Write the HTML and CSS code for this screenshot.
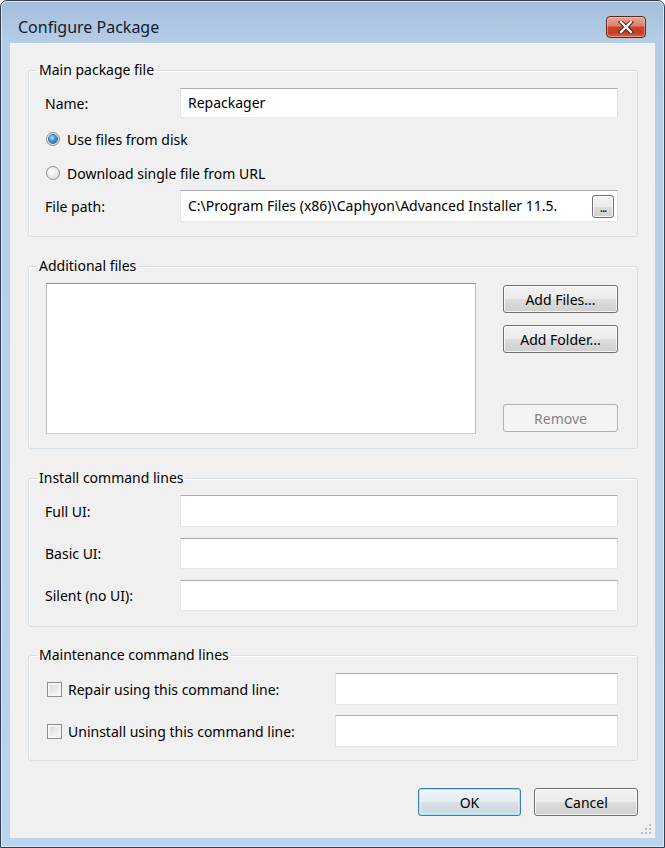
FILE: index.html
```html
<!DOCTYPE html>
<html>
<head>
<meta charset="utf-8">
<link rel="stylesheet" href="styles.css">
</head>
<body>
<div class="window">
  <div class="titlebar">
    <span class="title">Configure Package</span>
    <div class="close">
      <svg width="18" height="12" viewBox="0 0 18 12"><path d="M4 1 L14 11 M14 1 L4 11" stroke="#3b1a14" stroke-width="4.2" stroke-linecap="square"/><path d="M4 1 L14 11 M14 1 L4 11" stroke="#ffffff" stroke-width="2.4" stroke-linecap="square"/></svg>
    </div>
  </div>
  <div class="client">
    <fieldset class="group g1">
      <legend>Main package file</legend>
      <div class="row r-name">
        <span class="label">Name:</span>
        <div class="input wide">Repackager</div>
      </div>
      <div class="opt r-disk"><span class="radio checked"></span><span>Use files from disk</span></div>
      <div class="opt r-url"><span class="radio"></span><span>Download single file from URL</span></div>
      <div class="row r-path">
        <span class="label">File path:</span>
        <div class="input wide path"><span class="path-text">C:\Program Files (x86)\Caphyon\Advanced Installer 11.5.</span><span class="browse">...</span></div>
      </div>
    </fieldset>

    <fieldset class="group g2">
      <legend>Additional files</legend>
      <div class="files">
        <div class="listbox"></div>
        <div class="side">
          <span class="btn">Add Files...</span>
          <span class="btn gap">Add Folder...</span>
          <span class="btn disabled push">Remove</span>
        </div>
      </div>
    </fieldset>

    <fieldset class="group g3">
      <legend>Install command lines</legend>
      <div class="row r-cmd1"><span class="label">Full UI:</span><div class="input wide"></div></div>
      <div class="row r-cmd2"><span class="label">Basic UI:</span><div class="input wide"></div></div>
      <div class="row r-cmd3"><span class="label">Silent (no UI):</span><div class="input wide"></div></div>
    </fieldset>

    <fieldset class="group g4">
      <legend>Maintenance command lines</legend>
      <div class="row r-m1"><span class="check"></span><span class="clabel">Repair using this command line:</span><div class="input short"></div></div>
      <div class="row r-m2"><span class="check"></span><span class="clabel">Uninstall using this command line:</span><div class="input short"></div></div>
    </fieldset>

    <div class="actions">
      <span class="btn default">OK</span>
      <span class="btn">Cancel</span>
    </div>

    <svg class="grip" width="12" height="12" viewBox="0 0 12 12">
      <g fill="#b9bec6">
        <rect x="9" y="1" width="2" height="2"/>
        <rect x="5" y="5" width="2" height="2"/><rect x="9" y="5" width="2" height="2"/>
        <rect x="1" y="9" width="2" height="2"/><rect x="5" y="9" width="2" height="2"/><rect x="9" y="9" width="2" height="2"/>
      </g>
    </svg>
  </div>
</div>
</body>
</html>
```

FILE: styles.css
```css
* { box-sizing: border-box; }
html, body { margin: 0; padding: 0; background: #ffffff; }
body {
  font-family: "Noto Sans", "Open Sans", "DejaVu Sans", sans-serif;
  font-size: 14px;
  color: #000;
}
.window {
  width: 665px;
  height: 848px;
  border: 1px solid #34404f;
  border-radius: 7px 7px 0 0;
  background: linear-gradient(180deg, #a3bedb 0px, #b6cde6 42px, #bcd3ec 100%);
  display: flex;
  flex-direction: column;
  overflow: hidden;
  box-shadow: inset 0 0 0 1px #dbe7f4;
}
.titlebar {
  height: 42px;
  flex: none;
  display: flex;
  align-items: center;
  padding: 9px 18px 0 17px;
}
.title {
  font-size: 16px;
  color: #15202e;
  flex: 1;
}
.close {
  width: 40px;
  height: 22px;
  border: 1px solid #5a2a26;
  border-radius: 4px;
  background: linear-gradient(180deg, #e9a796 0%, #dd7e68 45%, #c9452b 50%, #c63d22 80%, #d66a4d 100%);
  box-shadow: inset 0 0 0 1px rgba(255,210,200,0.45);
  display: flex;
  align-items: center;
  justify-content: center;
}
.client {
  flex: 1;
  margin: 0 9px 9px 9px;
  background: #f0f0f0;
  padding: 18px 17px 0 18px;
  position: relative;
  display: flex;
  flex-direction: column;
}
.group {
  margin: 0;
  border: 1px solid #d5dfe5;
  border-radius: 3px;
  padding: 0 19px 0 16px;
  min-width: 0;
  box-shadow: inset 1px 1px 0 #ffffff;
}
.group legend {
  height: 18px;
  line-height: 18px;
  padding: 0 2px;
  margin-left: -8px;
  color: #000;
}
.g1 { padding-top: 9px; padding-bottom: 14px; }
.g2 { margin-top: 20px; padding-top: 8px; padding-bottom: 14px; }
.g3 { margin-top: 20px; padding-top: 8px; padding-bottom: 15px; }
.g4 { margin-top: 19px; padding-top: 9px; padding-bottom: 13px; }

.row { display: flex; align-items: center; }
.label { width: 135px; flex: none; }
.input {
  background: #ffffff;
  border: 1px solid;
  border-color: #abadb3 #dbdfe6 #e3e9ef #e2e3ea;
  height: 30px;
  line-height: 28px;
  padding: 0 7px;
  white-space: nowrap;
}
.input.wide { width: 438px; }
.input.short { width: 283px; margin-left: auto; }

.r-name .input { height: 30px; }
.r-disk { margin-top: 10px; }
.r-url { margin-top: 12px; }
.r-path { margin-top: 6px; }
.r-path .input { height: 32px; line-height: 30px; }

.path {
  display: flex;
  align-items: center;
  padding-right: 3px;
}
.path-text {
  flex: 1;
  white-space: nowrap;
  min-width: 0;
}
.browse {
  flex: none;
  width: 22px;
  height: 23px;
  margin-left: 2px;
  margin-top: 1px;
  border: 1px solid #707070;
  border-radius: 3px;
  background: linear-gradient(180deg, #f2f2f2 0%, #ebebeb 50%, #dddddd 50%, #cfcfcf 100%);
  box-shadow: inset 0 0 0 1px rgba(255,255,255,0.8);
  font-size: 12px;
  line-height: 24px;
  text-align: center;
  letter-spacing: -1px;
}

.opt { display: flex; align-items: center; height: 22px; }
.radio {
  width: 14px;
  height: 14px;
  border-radius: 50%;
  margin-left: 1px;
  margin-right: 7px;
  border: 1px solid #8b8d90;
  background: radial-gradient(circle at 40% 40%, #ffffff 0%, #e6e6e6 60%, #cfd1d3 100%);
  display: flex;
  align-items: center;
  justify-content: center;
  flex: none;
}
.radio.checked::after {
  content: "";
  width: 8px;
  height: 8px;
  border-radius: 50%;
  background: radial-gradient(circle at 40% 35%, #b9e6fb 0%, #3a93d1 45%, #175a8f 100%);
  box-shadow: 0 0 0 1px #2b6a9c;
}

.files { display: flex; }
.listbox {
  width: 430px;
  height: 151px;
  margin-left: 1px;
  background: #fff;
  border: 1px solid;
  border-color: #8e8f8f #bcbcbc #cfcfcf #bcbcbc;
}
.side {
  margin-left: auto;
  display: flex;
  flex-direction: column;
  padding: 2px 0 2px 0;
  width: 115px;
}
.btn {
  display: flex;
  align-items: center;
  justify-content: center;
  height: 28px;
  border: 1px solid #707070;
  border-radius: 3px;
  background: linear-gradient(180deg, #f2f2f2 0%, #ebebeb 48%, #dddddd 52%, #cfcfcf 100%);
  box-shadow: inset 0 0 0 1px rgba(255,255,255,0.75);
  color: #000;
}
.side .btn { width: 115px; }
.side .gap { margin-top: 12px; }
.side .push { margin-top: auto; }
.btn.disabled {
  border-color: #adb2b5;
  background: #f4f4f4;
  box-shadow: none;
  color: #838383;
}

.r-cmd1 .input { height: 32px; }
.r-cmd2 { margin-top: 11px; }
.r-cmd2 .input { height: 31px; }
.r-cmd3 { margin-top: 11px; }
.r-cmd3 .input { height: 31px; }

.r-m1 .input, .r-m2 .input { height: 32px; }
.r-m2 { margin-top: 10px; }
.check {
  width: 15px;
  height: 15px;
  margin-left: 2px;
  margin-right: 6px;
  border: 1px solid #8e8f8f;
  background: linear-gradient(135deg, #d2d4d6 0%, #eeeeee 60%, #fbfbfb 100%);
  box-shadow: inset 0 0 0 2px #f4f4f4;
  flex: none;
}
.clabel { white-space: nowrap; }

.actions {
  margin-top: 27px;
  display: flex;
  justify-content: flex-end;
  gap: 13px;
}
.actions .btn { width: 104px; }
.actions .btn.default {
  width: 103px;
  border-color: #3c7fb1;
  box-shadow: inset 0 0 0 1px #a6e1fa, inset 0 0 0 2px rgba(255,255,255,0.4);
  background: linear-gradient(180deg, #eef5f9 0%, #e4edf2 48%, #d6e0e6 52%, #cdd6dc 100%);
}
.grip {
  position: absolute;
  right: 3px;
  bottom: 3px;
}
```
